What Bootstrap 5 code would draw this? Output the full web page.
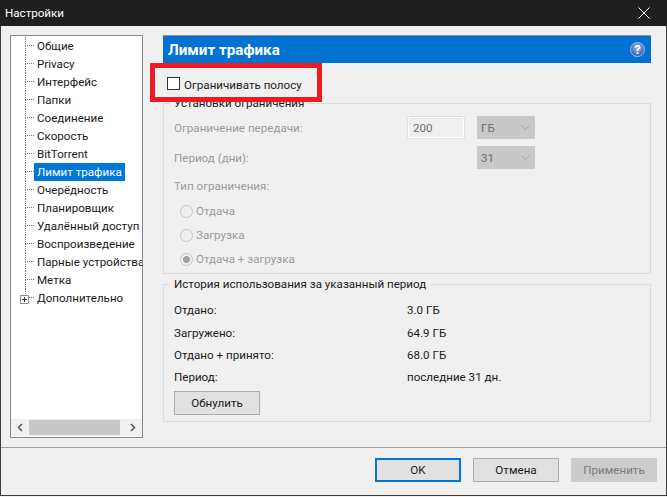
<!DOCTYPE html>
<html lang="ru">
<head>
  <meta charset="UTF-8" />
  <meta name="viewport" content="width=device-width, initial-scale=1.0" />
  <title>Настройки</title>
  <link href="https://cdn.jsdelivr.net/npm/bootstrap@5.3.0/dist/css/bootstrap.min.css" rel="stylesheet" />
  <script src="https://cdn.jsdelivr.net/npm/bootstrap@5.3.0/dist/js/bootstrap.bundle.min.js"></script>
  <style>
    body {
      background-color: #f0f0f0;
      font-family: Roboto, "Liberation Sans", sans-serif;
      font-size: 11.6px;
      line-height: 16px;
      color: #1a1a1a;
    }
    .app-win {
      width: 667px;
      height: 496px;
      border: solid #3a3a3a;
      border-width: 0 1px 1px 1px;
      background: #f0f0f0;
    }
    .win-title {
      height: 26px;
      margin: 0 -1px;
      padding: 0 0 0 5px;
      background: #1f1f1f;
      color: #fff;
    }
    .win-close { width: 46px; }
    .win-body { padding: 9px 9px 0 9px; }

    /* tree on the left */
    .tree-box {
      width: 133px;
      height: 403px;
      border: 1px solid #828790;
      background: #fff;
      overflow: hidden;
    }
    .tree-items { padding-top: 1px; }
    .tree-row {
      position: relative;
      height: 18px;
      line-height: 18px;
      padding-left: 23px;
      white-space: nowrap;
    }
    .tree-row::before {
      content: "";
      position: absolute;
      left: 14px;
      top: 0;
      width: 9px;
      height: 9px;
      border-left: 1px dotted #777;
      border-bottom: 1px dotted #777;
    }
    .tree-row.tree-line::after {
      content: "";
      position: absolute;
      left: 14px;
      top: 9px;
      height: 9px;
      border-left: 1px dotted #777;
    }
    .tree-label { display: inline-block; padding: 0 3px; height: 18px; }
    .tree-row.picked .tree-label { background: #0078d7; color: #fff; }
    .tree-plus {
      position: absolute;
      left: 9px;
      top: 6px;
      width: 9px;
      height: 9px;
      display: block;
      background: #fff;
    }
    .tree-scroll { height: 17px; background: #f0f0f0; margin-bottom: 1px; }
    .scroll-btn { width: 18px; }
    .scroll-thumb { width: 91px; height: 15px; background: #c8c8c8; }

    /* right panel */
    .page-panel { width: 488px; margin-left: 20px; }
    .page-head {
      height: 28px;
      padding: 0 6px 0 5px;
      background: #0072d2;
      border-top: 1px solid #8a8f96;
      color: #fff;
      font-size: 15.2px;
      font-weight: 700;
    }
    .help-dot {
      width: 15px;
      height: 15px;
      border-radius: 50%;
      background: radial-gradient(circle at 50% 35%, #9fb4ea, #3c5fc0 75%);
      border: 1px solid #a8bdf0;
      color: #fff;
      font-size: 13px;
      font-weight: 700;
      line-height: 13px;
      text-align: center;
    }
    .limit-row {
      position: relative;
      height: 32px;
      padding: 14px 0 0 4px;
    }
    .red-frame {
      position: absolute;
      z-index: 1;
      left: -13px;
      top: 0;
      width: 172px;
      height: 39px;
      border: 5px solid #ed1c24;
      pointer-events: none;
    }
    .win-check {
      width: 13px;
      height: 13px;
      margin: 0 4px 0 0;
      border: 1px solid #333;
      border-radius: 0;
      background: #fff;
      appearance: none;
      flex: none;
    }
    .opt-group {
      border: 1px solid #dcdcdc;
      padding: 0 10px;
    }
    .opt-group legend {
      float: none;
      width: auto;
      margin: 0 0 0 -4px;
      padding: 0 4px;
      font-size: 11.6px;
      line-height: 16px;
      color: #1a1a1a;
    }
    .opt-limits { height: 179px; padding-top: 5px; }
    .opt-history { height: 146px; margin-top: 2px; }
    .off-text { color: #9b9b9b; }
    .ctl-row { height: 23px; margin-bottom: 7px; }
    .ctl-label { width: 233px; }
    .num-box {
      width: 58px;
      height: 23px;
      padding: 0 5px;
      border: 1px solid #e4e4e4;
      outline: 1px solid #fff;
      outline-offset: -2px;
      background: #f0f0f0;
      color: #6d6d6d;
      font: inherit;
    }
    .unit-pick {
      width: 58px;
      height: 23px;
      margin-left: 12px;
      padding: 0 4px;
      border: 0;
      border-radius: 0;
      background-color: #c8c8c8;
      background-image: url("data:image/svg+xml,%3Csvg xmlns='http://www.w3.org/2000/svg' width='9' height='5'%3E%3Cpath d='M.5.5l4 4 4-4' fill='none' stroke='%23a4a4a4'/%3E%3C/svg%3E");
      background-repeat: no-repeat;
      background-position: right 5px center;
      background-size: 9px 5px;
      color: #6d6d6d;
      font: inherit;
      appearance: none;
      opacity: 1;
    }
    .pick-alone { margin-left: 70px; }
    .type-label { height: 16px; margin-top: 9px; margin-bottom: 5px; }
    .radio-row { height: 24px; padding-left: 6px; }
    .win-radio {
      width: 13px;
      height: 13px;
      margin: 0 3px 0 0;
      border: 1px solid #c4c4c4;
      border-radius: 50%;
      background: #f0f0f0;
      appearance: none;
      flex: none;
    }
    .win-radio:checked {
      background: radial-gradient(circle, #a0a0a0 0 3px, #f0f0f0 4px);
    }
    .hist-row { height: 22.4px; }
    .hist-name { width: 233px; }
    .hist-list { padding-top: 7px; }
    .win-btn {
      width: 86px;
      height: 24px;
      padding: 0;
      border: 1px solid #adadad;
      border-radius: 0;
      background: #e1e1e1;
      color: #1a1a1a;
      font-size: 11.6px;
      line-height: 16px;
    }
    .win-btn.is-default { border: 2px solid #0078d7; }
    .win-btn:disabled { background: #cccccc; border-color: #cccccc; color: #7a7a7a; opacity: 1; }
    .reset-btn { margin-top: 2px; }

    .win-foot {
      height: 48px;
      margin-top: 9px;
      padding: 10px 9px 0 0;
      border-top: 1px solid #a0a0a0;
      gap: 12px;
    }
  </style>
</head>
<body>
  <div class="app-win d-flex flex-column">
    <!-- Title bar -->
    <div class="win-title d-flex align-items-center justify-content-between">
      <span>Настройки</span>
      <span class="win-close d-flex justify-content-center">
        <svg width="12" height="12" viewBox="0 0 12 12"><path d="M.5.5l11 11M11.5.5l-11 11" stroke="#fff" fill="none"/></svg>
      </span>
    </div>

    <div class="win-body d-flex">
      <!-- Category tree -->
      <div class="tree-box d-flex flex-column">
        <ul class="tree-items list-unstyled mb-0 flex-grow-1">
          <li class="tree-row tree-line"><span class="tree-label">Общие</span></li>
          <li class="tree-row tree-line"><span class="tree-label">Privacy</span></li>
          <li class="tree-row tree-line"><span class="tree-label">Интерфейс</span></li>
          <li class="tree-row tree-line"><span class="tree-label">Папки</span></li>
          <li class="tree-row tree-line"><span class="tree-label">Соединение</span></li>
          <li class="tree-row tree-line"><span class="tree-label">Скорость</span></li>
          <li class="tree-row tree-line"><span class="tree-label">BitTorrent</span></li>
          <li class="tree-row tree-line picked"><span class="tree-label">Лимит трафика</span></li>
          <li class="tree-row tree-line"><span class="tree-label">Очерёдность</span></li>
          <li class="tree-row tree-line"><span class="tree-label">Планировщик</span></li>
          <li class="tree-row tree-line"><span class="tree-label">Удалённый доступ</span></li>
          <li class="tree-row tree-line"><span class="tree-label">Воспроизведение</span></li>
          <li class="tree-row tree-line"><span class="tree-label">Парные устройства</span></li>
          <li class="tree-row tree-line"><span class="tree-label">Метка</span></li>
          <li class="tree-row">
            <svg class="tree-plus" viewBox="0 0 9 9"><path d="M.5.5h8v8h-8z" fill="#fff" stroke="#8a8a8a"/><path d="M2 4.500h5M4.500 2v5" stroke="#333"/></svg>
            <span class="tree-label">Дополнительно</span>
          </li>
        </ul>
        <div class="tree-scroll d-flex align-items-center">
          <span class="scroll-btn d-flex justify-content-center">
            <svg width="6" height="9" viewBox="0 0 6 9"><path d="M5 1L1.500 4.500 5 8" fill="none" stroke="#555" stroke-width="1.5"/></svg>
          </span>
          <span class="scroll-thumb"></span>
          <span class="flex-grow-1"></span>
          <span class="scroll-btn d-flex justify-content-center">
            <svg width="6" height="9" viewBox="0 0 6 9"><path d="M1 1l3.500 3.500L1 8" fill="none" stroke="#555" stroke-width="1.5"/></svg>
          </span>
        </div>
      </div>

      <!-- Settings page -->
      <div class="page-panel">
        <div class="page-head d-flex align-items-center justify-content-between">
          <span>Лимит трафика</span>
          <span class="help-dot">?</span>
        </div>

        <div class="limit-row d-flex align-items-start">
          <input class="win-check" type="checkbox" id="limitBand" />
          <label for="limitBand">Ограничивать полосу</label>
          <div class="red-frame"></div>
        </div>

        <fieldset class="opt-group opt-limits">
          <legend>Установки ограничения</legend>
          <div class="ctl-row d-flex align-items-center">
            <span class="ctl-label off-text">Ограничение передачи:</span>
            <input class="num-box" type="text" value="200" disabled />
            <select class="unit-pick" disabled><option>ГБ</option></select>
          </div>
          <div class="ctl-row d-flex align-items-center">
            <span class="ctl-label off-text">Период (дни):</span>
            <select class="unit-pick pick-alone" disabled><option>31</option></select>
          </div>
          <div class="type-label off-text">Тип ограничения:</div>
          <div class="radio-row d-flex align-items-center off-text">
            <input class="win-radio" type="radio" name="limitType" disabled /><span>Отдача</span>
          </div>
          <div class="radio-row d-flex align-items-center off-text">
            <input class="win-radio" type="radio" name="limitType" disabled /><span>Загрузка</span>
          </div>
          <div class="radio-row d-flex align-items-center off-text">
            <input class="win-radio" type="radio" name="limitType" checked disabled /><span>Отдача + загрузка</span>
          </div>
        </fieldset>

        <fieldset class="opt-group opt-history">
          <legend>История использования за указанный период</legend>
          <div class="hist-list">
            <div class="hist-row d-flex align-items-center"><span class="hist-name">Отдано:</span><span>3.0 ГБ</span></div>
            <div class="hist-row d-flex align-items-center"><span class="hist-name">Загружено:</span><span>64.9 ГБ</span></div>
            <div class="hist-row d-flex align-items-center"><span class="hist-name">Отдано + принято:</span><span>68.0 ГБ</span></div>
            <div class="hist-row d-flex align-items-center"><span class="hist-name">Период:</span><span>последние 31 дн.</span></div>
          </div>
          <button class="win-btn reset-btn" type="button">Обнулить</button>
        </fieldset>
      </div>
    </div>

    <!-- Dialog buttons -->
    <div class="win-foot d-flex justify-content-end">
      <button class="win-btn is-default" type="button">OK</button>
      <button class="win-btn" type="button">Отмена</button>
      <button class="win-btn" type="button" disabled>Применить</button>
    </div>
  </div>
</body>
</html>
